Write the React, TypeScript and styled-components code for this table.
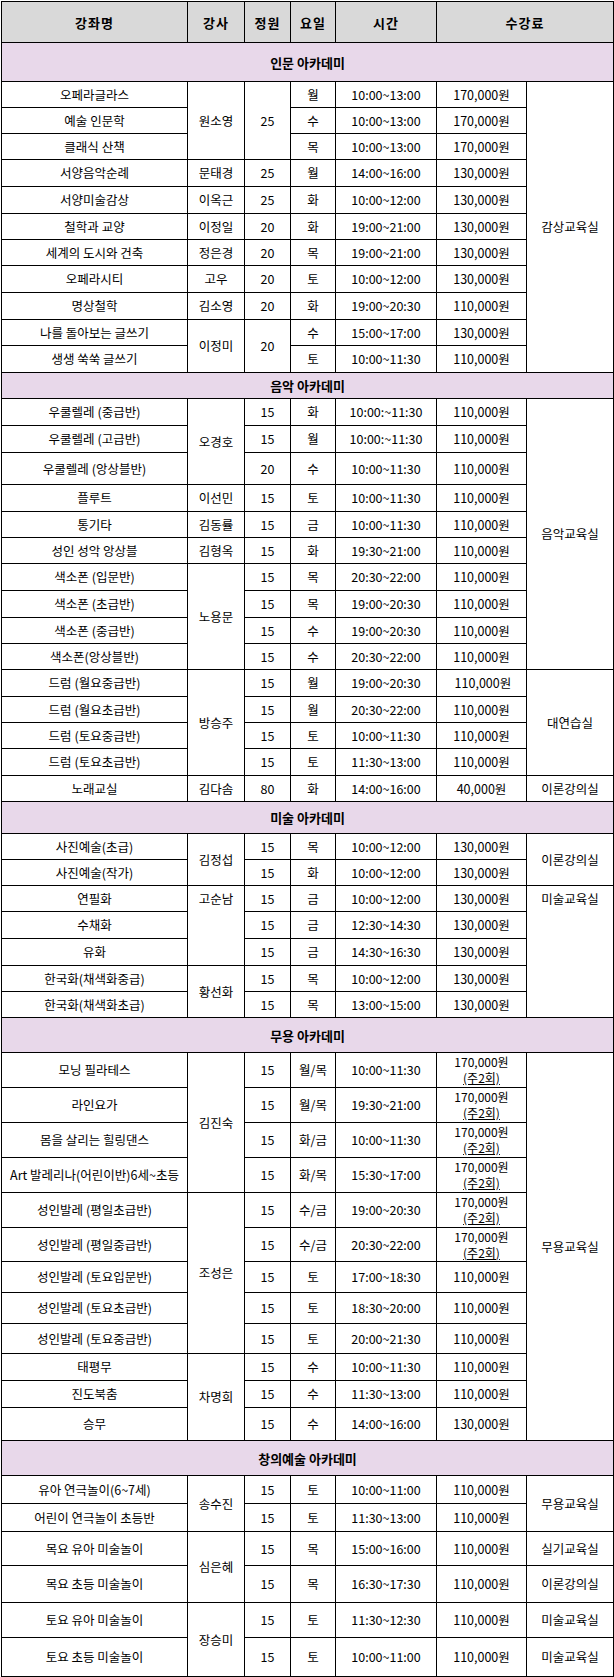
import React from 'react';
import styled, { createGlobalStyle } from 'styled-components';

const GlobalStyle = createGlobalStyle`
  body {
    margin: 0;
    background: #ffffff;
    font-family: "Noto Sans CJK KR", "Noto Sans", sans-serif;
  }
`;

const Wrap = styled.div`
  padding: 1px 0 0 1px;
`;

const Table = styled.table`
  width: 612px;
  border-collapse: collapse;
  table-layout: fixed;
  font-size: 12.5px;
  color: #000;
`;

const HeadRow = styled.tr`
  height: 41px;
  background: #d9d9d9;
`;

const Th = styled.th`
  border: 1px solid #000;
  font-weight: bold;
  font-size: 13px;
  padding: 0;
  letter-spacing: 1px;
`;

const Row = styled.tr<{ $h: number }>`
  height: ${p => p.$h}px;
`;

const SectionCell = styled.td`
  background: #e8d8ea;
  border: 1px solid #000;
  text-align: center;
  font-weight: bold;
  font-size: 13px;
  padding: 0;
`;

const Td = styled.td<{ $top?: boolean }>`
  border: 1px solid #000;
  text-align: center;
  vertical-align: ${p => (p.$top ? 'top' : 'middle')};
  padding: ${p => (p.$top ? '5px 0 0' : '0')};
  white-space: nowrap;
  line-height: 1.25;
`;

const FeeLine = styled.span`
  display: block;
  font-size: 12px;
  line-height: 16px;
`;

const Note = styled(FeeLine)`
  text-decoration: underline;
`;

type Cell = string | { t: string; rs?: number; top?: boolean };
type RowData = { h: number; c: Cell[] };
type Section = { title: string; h: number; rows: RowData[] };

const FEE2 = '170,000원|(주2회)';

const sections: Section[] = [
  {
    title: '인문 아카데미',
    h: 39,
    rows: [
      { h: 26, c: ['오페라글라스', { t: '원소영', rs: 3 }, { t: '25', rs: 3 }, '월', '10:00~13:00', '170,000원', { t: '감상교육실', rs: 11 }] },
      { h: 26, c: ['예술 인문학', '수', '10:00~13:00', '170,000원'] },
      { h: 26, c: ['클래식 산책', '목', '10:00~13:00', '170,000원'] },
      { h: 27, c: ['서양음악순례', '문태경', '25', '월', '14:00~16:00', '130,000원'] },
      { h: 27, c: ['서양미술감상', '이옥근', '25', '화', '10:00~12:00', '130,000원'] },
      { h: 26, c: ['철학과 교양', '이정일', '20', '화', '19:00~21:00', '130,000원'] },
      { h: 26, c: ['세계의 도시와 건축', '정은경', '20', '목', '19:00~21:00', '130,000원'] },
      { h: 27, c: ['오페라시티', '고우', '20', '토', '10:00~12:00', '130,000원'] },
      { h: 27, c: ['명상철학', '김소영', '20', '화', '19:00~20:30', '110,000원'] },
      { h: 26, c: ['나를 돌아보는 글쓰기', { t: '이정미', rs: 2 }, { t: '20', rs: 2 }, '수', '15:00~17:00', '130,000원'] },
      { h: 27, c: ['생생 쑥쑥 글쓰기', '토', '10:00~11:30', '110,000원'] },
    ],
  },
  {
    title: '음악 아카데미',
    h: 26,
    rows: [
      { h: 27, c: ['우쿨렐레 (중급반)', { t: '오경호', rs: 3 }, '15', '화', '10:00:~11:30', '110,000원', { t: '음악교육실', rs: 10 }] },
      { h: 27, c: ['우쿨렐레 (고급반)', '15', '월', '10:00:~11:30', '110,000원'] },
      { h: 32, c: ['우쿨렐레 (앙상블반)', '20', '수', '10:00~11:30', '110,000원'] },
      { h: 27, c: ['플루트', '이선민', '15', '토', '10:00~11:30', '110,000원'] },
      { h: 26, c: ['통기타', '김동률', '15', '금', '10:00~11:30', '110,000원'] },
      { h: 26, c: ['성인 성악 앙상블', '김형옥', '15', '화', '19:30~21:00', '110,000원'] },
      { h: 27, c: ['색소폰 (입문반)', { t: '노용문', rs: 4 }, '15', '목', '20:30~22:00', '110,000원'] },
      { h: 27, c: ['색소폰 (초급반)', '15', '목', '19:00~20:30', '110,000원'] },
      { h: 26, c: ['색소폰 (중급반)', '15', '수', '19:00~20:30', '110,000원'] },
      { h: 26, c: ['색소폰(앙상블반)', '15', '수', '20:30~22:00', '110,000원'] },
      { h: 27, c: ['드럼 (월요중급반)', { t: '방승주', rs: 4 }, '15', '월', '19:00~20:30', '\u00a0110,000원', { t: '대연습실', rs: 4 }] },
      { h: 26, c: ['드럼 (월요초급반)', '15', '월', '20:30~22:00', '110,000원'] },
      { h: 26, c: ['드럼 (토요중급반)', '15', '토', '10:00~11:30', '110,000원'] },
      { h: 27, c: ['드럼 (토요초급반)', '15', '토', '11:30~13:00', '110,000원'] },
      { h: 26, c: ['노래교실', '김다솜', '80', '화', '14:00~16:00', '40,000원', '이론강의실'] },
    ],
  },
  {
    title: '미술 아카데미',
    h: 32,
    rows: [
      { h: 26, c: ['사진예술(초급)', { t: '김정섭', rs: 2 }, '15', '목', '10:00~12:00', '130,000원', { t: '이론강의실', rs: 2 }] },
      { h: 26, c: ['사진예술(작가)', '15', '화', '10:00~12:00', '130,000원'] },
      { h: 26, c: ['연필화', { t: '고순남', rs: 3, top: true }, '15', '금', '10:00~12:00', '130,000원', { t: '미술교육실', rs: 5, top: true }] },
      { h: 27, c: ['수채화', '15', '금', '12:30~14:30', '130,000원'] },
      { h: 27, c: ['유화', '15', '금', '14:30~16:30', '130,000원'] },
      { h: 26, c: ['한국화(채색화중급)', { t: '황선화', rs: 2 }, '15', '목', '10:00~12:00', '130,000원'] },
      { h: 26, c: ['한국화(채색화초급)', '15', '목', '13:00~15:00', '130,000원'] },
    ],
  },
  {
    title: '무용 아카데미',
    h: 35,
    rows: [
      { h: 35, c: ['모닝 필라테스', { t: '김진숙', rs: 4 }, '15', '월/목', '10:00~11:30', FEE2, { t: '무용교육실', rs: 12 }] },
      { h: 35, c: ['라인요가', '15', '월/목', '19:30~21:00', FEE2] },
      { h: 35, c: ['몸을 살리는 힐링댄스', '15', '화/금', '10:00~11:30', FEE2] },
      { h: 35, c: ['Art 발레리나(어린이반)6세~초등', '15', '화/목', '15:30~17:00', FEE2] },
      { h: 35, c: ['성인발레 (평일초급반)', { t: '조성은', rs: 5 }, '15', '수/금', '19:00~20:30', FEE2] },
      { h: 34, c: ['성인발레 (평일중급반)', '15', '수/금', '20:30~22:00', FEE2] },
      { h: 31, c: ['성인발레 (토요입문반)', '15', '토', '17:00~18:30', '110,000원'] },
      { h: 31, c: ['성인발레 (토요초급반)', '15', '토', '18:30~20:00', '110,000원'] },
      { h: 30, c: ['성인발레 (토요중급반)', '15', '토', '20:00~21:30', '110,000원'] },
      { h: 27, c: ['태평무', { t: '차명희', rs: 3 }, '15', '수', '10:00~11:30', '110,000원'] },
      { h: 27, c: ['진도북춤', '15', '수', '11:30~13:00', '110,000원'] },
      { h: 33, c: ['승무', '15', '수', '14:00~16:00', '130,000원'] },
    ],
  },
  {
    title: '창의예술 아카데미',
    h: 35,
    rows: [
      { h: 28, c: ['유아 연극놀이(6~7세)', { t: '송수진', rs: 2 }, '15', '토', '10:00~11:00', '110,000원', { t: '무용교육실', rs: 2 }] },
      { h: 28, c: ['어린이 연극놀이 초등반', '15', '토', '11:30~13:00', '110,000원'] },
      { h: 34, c: ['목요 유아 미술놀이', { t: '심은혜', rs: 2 }, '15', '목', '15:00~16:00', '110,000원', '실기교육실'] },
      { h: 37, c: ['목요 초등 미술놀이', '15', '목', '16:30~17:30', '110,000원', '이론강의실'] },
      { h: 35, c: ['토요 유아 미술놀이', { t: '장승미', rs: 2 }, '15', '토', '11:30~12:30', '110,000원', '미술교육실'] },
      { h: 39, c: ['토요 초등 미술놀이', '15', '토', '10:00~11:00', '110,000원', '미술교육실'] },
    ],
  },
];

const colWidths = [186, 57, 46, 45, 101, 90, 87];

function renderText(t: string) {
  if (t.includes('|')) {
    const [fee, note] = t.split('|');
    return (
      <>
        <FeeLine>{fee}</FeeLine>
        <Note>{note}</Note>
      </>
    );
  }
  return t;
}

const App: React.FC = () => {
  return (
    <>
      <GlobalStyle />
      <Wrap>
        <Table>
          <colgroup>
            {colWidths.map((w, i) => (
              <col key={i} width={w} />
            ))}
          </colgroup>
          <thead>
            <HeadRow>
              <Th>강좌명</Th>
              <Th>강사</Th>
              <Th>정원</Th>
              <Th>요일</Th>
              <Th>시간</Th>
              <Th colSpan={2}>수강료</Th>
            </HeadRow>
          </thead>
          {sections.map(sec => (
            <tbody key={sec.title}>
              <Row $h={sec.h}>
                <SectionCell colSpan={7}>{sec.title}</SectionCell>
              </Row>
              {sec.rows.map((r, ri) => (
                <Row key={ri} $h={r.h}>
                  {r.c.map((cell, ci) => {
                    const c = typeof cell === 'string' ? { t: cell } : cell;
                    return (
                      <Td key={ci} rowSpan={c.rs} $top={c.top}>
                        {renderText(c.t)}
                      </Td>
                    );
                  })}
                </Row>
              ))}
            </tbody>
          ))}
        </Table>
      </Wrap>
    </>
  );
};

export default App;
